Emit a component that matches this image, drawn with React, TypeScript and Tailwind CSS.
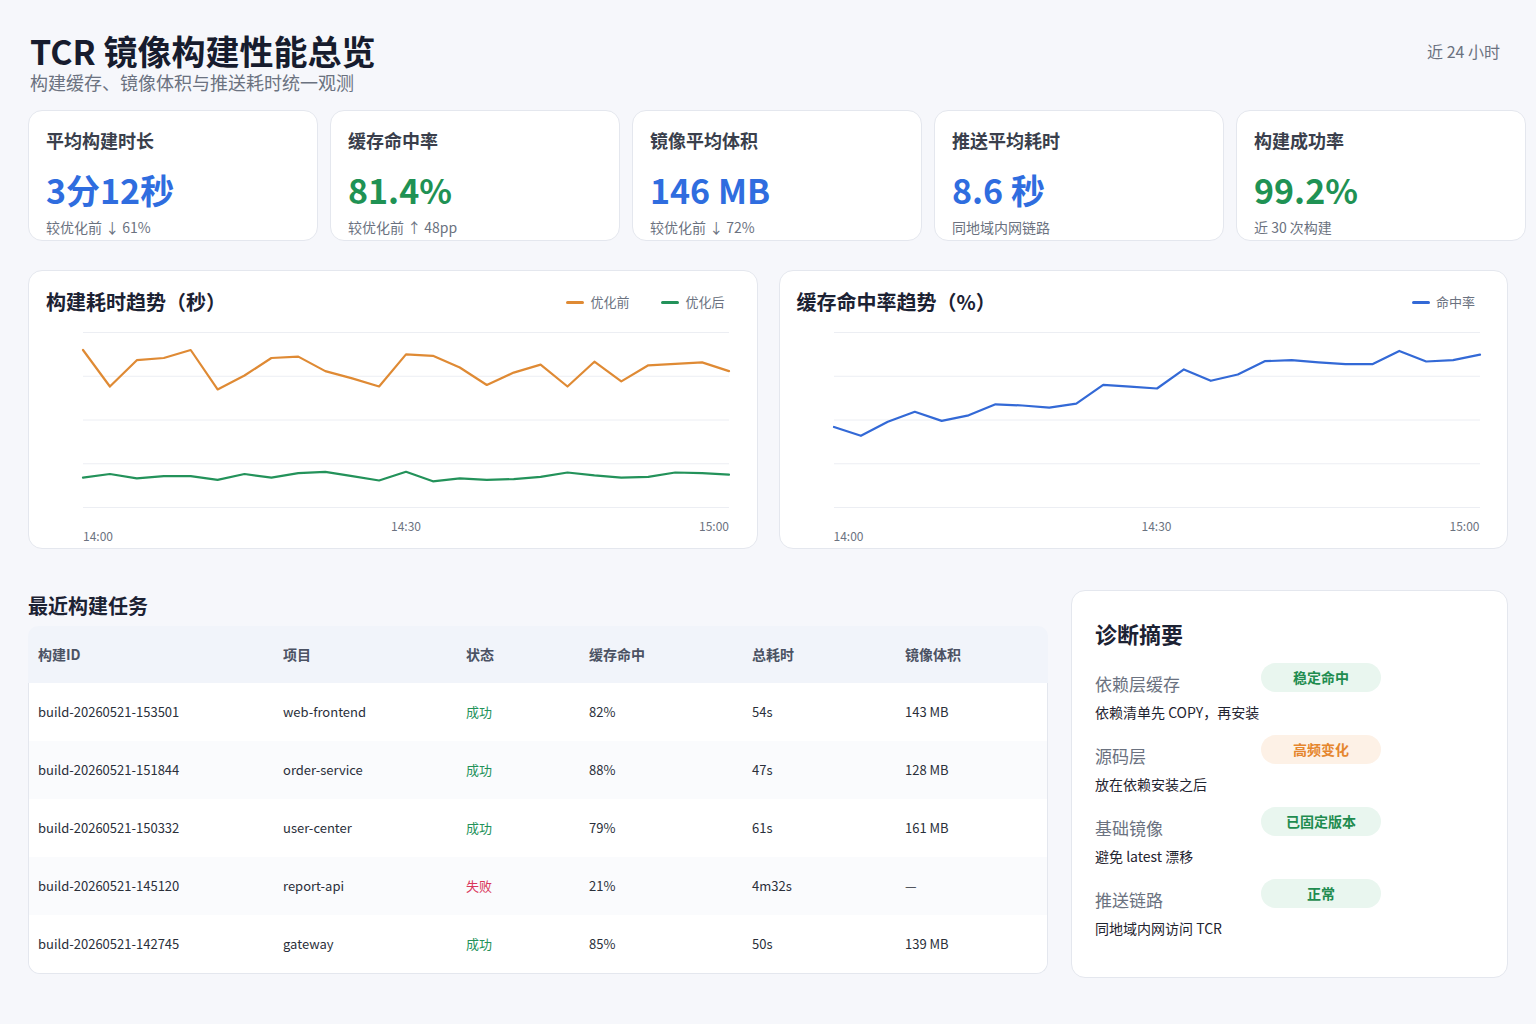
import React from "react";

const FONT = { fontFamily: '"Noto Sans CJK SC", "Noto Sans", "Liberation Sans", sans-serif' };

type Kpi = { label: string; value: string; sub: string; tone: "blue" | "green" };

const kpis: Kpi[] = [
  { label: "平均构建时长", value: "3分12秒", sub: "较优化前 ↓ 61%", tone: "blue" },
  { label: "缓存命中率", value: "81.4%", sub: "较优化前 ↑ 48pp", tone: "green" },
  { label: "镜像平均体积", value: "146 MB", sub: "较优化前 ↓ 72%", tone: "blue" },
  { label: "推送平均耗时", value: "8.6 秒", sub: "同地域内网链路", tone: "blue" },
  { label: "构建成功率", value: "99.2%", sub: "近 30 次构建", tone: "green" },
];

// build duration samples (seconds), 14:00 - 15:00, every 2.5 min
const before = [216, 166, 202, 205, 216, 162, 181, 205, 207, 187, 177, 166, 210, 208, 192, 168, 185, 196, 166, 200, 173, 195, 197, 199, 187];
const after = [41, 46, 40, 43, 43, 38, 46, 41, 47, 49, 43, 37, 49, 36, 40, 38, 39, 42, 48, 44, 41, 42, 48, 47, 45];
// cache hit rate (%)
const hitRate = [46, 41, 49, 54.7, 49.5, 52.7, 59, 58.3, 57.1, 59.3, 70.1, 69.1, 68, 78.9, 72.4, 76, 83.6, 84.2, 82.9, 81.9, 81.9, 89.5, 83.4, 84.2, 87.3];

const jobs = [
  { id: "build-20260521-153501", project: "web-frontend", ok: true, hit: "82%", time: "54s", size: "143 MB" },
  { id: "build-20260521-151844", project: "order-service", ok: true, hit: "88%", time: "47s", size: "128 MB" },
  { id: "build-20260521-150332", project: "user-center", ok: true, hit: "79%", time: "61s", size: "161 MB" },
  { id: "build-20260521-145120", project: "report-api", ok: false, hit: "21%", time: "4m32s", size: "—" },
  { id: "build-20260521-142745", project: "gateway", ok: true, hit: "85%", time: "50s", size: "139 MB" },
];

const diag = [
  { name: "依赖层缓存", desc: "依赖清单先 COPY，再安装", badge: "稳定命中", warn: false },
  { name: "源码层", desc: "放在依赖安装之后", badge: "高频变化", warn: true },
  { name: "基础镜像", desc: "避免 latest 漂移", badge: "已固定版本", warn: false },
  { name: "推送链路", desc: "同地域内网访问 TCR", badge: "正常", warn: false },
];

const W = 646;
const H = 175;

function toPoints(data: number[], max: number) {
  const step = W / (data.length - 1);
  return data.map((v, i) => `${(i * step).toFixed(1)},${(H - (v / max) * H + 0.5).toFixed(1)}`).join(" ");
}

function LineChart({ series, max }: { series: { data: number[]; color: string }[]; max: number }) {
  return (
    <div className="ml-[54px] mt-[16px] w-[646px]">
      <svg width={W} height={H + 1} viewBox={`0 0 ${W} ${H + 1}`} className="block overflow-visible">
        {[0, 1, 2, 3, 4].map((i) => (
          <line key={i} x1={0} x2={W} y1={(i * H) / 4 + 0.5} y2={(i * H) / 4 + 0.5} stroke="#eceef3" strokeWidth={1} />
        ))}
        {series.map((s, i) => (
          <polyline
            key={i}
            points={toPoints(s.data, max)}
            fill="none"
            stroke={s.color}
            strokeWidth={2.2}
            strokeLinejoin="round"
            strokeLinecap="round"
          />
        ))}
      </svg>
      <div className="mt-[10px] flex items-start justify-between text-[12px] leading-[16px] text-[#6b7280]">
        <span className="pt-[10px]">14:00</span>
        <span>14:30</span>
        <span>15:00</span>
      </div>
    </div>
  );
}

function Legend({ items }: { items: { label: string; color: string }[] }) {
  return (
    <div className="flex items-center gap-[32px]">
      {items.map((it) => (
        <div key={it.label} className="flex items-center gap-[6px] text-[13px] leading-[18px] text-[#6b7280]">
          <span className="h-[3px] w-[18px] rounded-full" style={{ backgroundColor: it.color }} />
          {it.label}
        </div>
      ))}
    </div>
  );
}

function ChartCard({ title, legend, children }: { title: string; legend: React.ReactNode; children: React.ReactNode }) {
  return (
    <div className="h-[279px] rounded-[14px] border border-[#e4e7ee] bg-white">
      <div className="flex items-center justify-between pl-[17px] pr-[32px] pt-[17px]">
        <h2 className="text-[20px] font-bold leading-[28px] text-[#1c2233]">{title}</h2>
        {legend}
      </div>
      {children}
    </div>
  );
}

export default function App() {
  return (
    <div className="min-h-[1024px] w-[1536px] overflow-hidden bg-[#f6f7fb] pl-[28px] pr-[28px] pt-[33px]" style={FONT}>
      <header className="flex items-start justify-between pl-[2px]">
        <div>
          <h1 className="text-[34px] font-bold leading-[36px] text-[#171c2e]">TCR 镜像构建性能总览</h1>
          <p className="text-[18px] leading-[26px] text-[#6b7280]">构建缓存、镜像体积与推送耗时统一观测</p>
        </div>
        <div className="pr-[8px] pt-[6px] text-[16px] leading-[24px] text-[#6b7280]">近 24 小时</div>
      </header>

      <section className="mt-[15px] flex gap-[12px]">
        {kpis.map((k) => (
          <div key={k.label} className="h-[131px] w-[290px] shrink-0 rounded-[14px] border border-[#e4e7ee] bg-white pl-[17px] pt-[16px]">
            <div className="text-[18px] font-bold leading-[26px] text-[#3a3f4c]">{k.label}</div>
            <div
              className={
                "mt-[16px] text-[34px] font-bold leading-[42px] " + (k.tone === "blue" ? "text-[#2f6ddf]" : "text-[#1f9254]")
              }
            >
              {k.value}
            </div>
            <div className="mt-[6px] text-[14px] leading-[20px] text-[#6b7280]">{k.sub}</div>
          </div>
        ))}
      </section>

      <section className="mt-[29px] grid grid-cols-2 gap-[21px]">
        <ChartCard
          title="构建耗时趋势（秒）"
          legend={
            <Legend
              items={[
                { label: "优化前", color: "#df8a34" },
                { label: "优化后", color: "#23925a" },
              ]}
            />
          }
        >
          <LineChart
            max={240}
            series={[
              { data: before, color: "#df8a34" },
              { data: after, color: "#23925a" },
            ]}
          />
        </ChartCard>
        <ChartCard title="缓存命中率趋势（%）" legend={<Legend items={[{ label: "命中率", color: "#3369d6" }]} />}>
          <LineChart max={100} series={[{ data: hitRate, color: "#3369d6" }]} />
        </ChartCard>
      </section>

      <section className="mt-[41px] flex items-start gap-[23px]">
        <div className="w-[1020px] pt-[2px]">
          <h2 className="text-[20px] font-bold leading-[28px] text-[#1c2233]">最近构建任务</h2>
          <div className="mt-[6px]">
            <div className="grid h-[57px] grid-cols-[245px_183px_123px_163px_153px_1fr] items-center rounded-t-[10px] bg-[#f1f4fa] pl-[10px] text-[14px] font-bold text-[#4b5263]">
              <div>构建ID</div>
              <div>项目</div>
              <div>状态</div>
              <div>缓存命中</div>
              <div>总耗时</div>
              <div>镜像体积</div>
            </div>
            <div className="overflow-hidden rounded-b-[12px] border-x border-b border-[#e4e7ee]">
              {jobs.map((j, i) => (
                <div
                  key={j.id}
                  className={
                    "grid h-[58px] grid-cols-[245px_183px_123px_163px_153px_1fr] items-center pl-[9px] text-[13px] text-[#2a2f3a] " +
                    (i % 2 === 1 ? "bg-[#fafbfd]" : "bg-white")
                  }
                >
                  <div>{j.id}</div>
                  <div>{j.project}</div>
                  <div className={j.ok ? "text-[#23925a]" : "text-[#d9365a]"}>{j.ok ? "成功" : "失败"}</div>
                  <div>{j.hit}</div>
                  <div>{j.time}</div>
                  <div>{j.size}</div>
                </div>
              ))}
            </div>
          </div>
        </div>

        <aside className="h-[388px] flex-1 rounded-[14px] border border-[#e4e7ee] bg-white pl-[23px] pt-[27px]">
          <h2 className="text-[22px] font-bold leading-[30px] text-[#1c2233]">诊断摘要</h2>
          <div className="mt-[15px] flex flex-col gap-[13px]">
            {diag.map((d) => (
              <div key={d.name}>
                <div className="flex items-start">
                  <div className="w-[166px] pt-[9px] text-[17px] leading-[24px] text-[#6b7280]">{d.name}</div>
                  <span
                    className={
                      "flex h-[29px] w-[120px] items-center justify-center rounded-full text-[14px] font-bold " +
                      (d.warn ? "bg-[#fdf1e6] text-[#e5862e]" : "bg-[#e9f6ef] text-[#1f8c4f]")
                    }
                  >
                    {d.badge}
                  </span>
                </div>
                <div className="mt-[6px] text-[14px] leading-[20px] text-[#1f2430]">{d.desc}</div>
              </div>
            ))}
          </div>
        </aside>
      </section>
    </div>
  );
}
